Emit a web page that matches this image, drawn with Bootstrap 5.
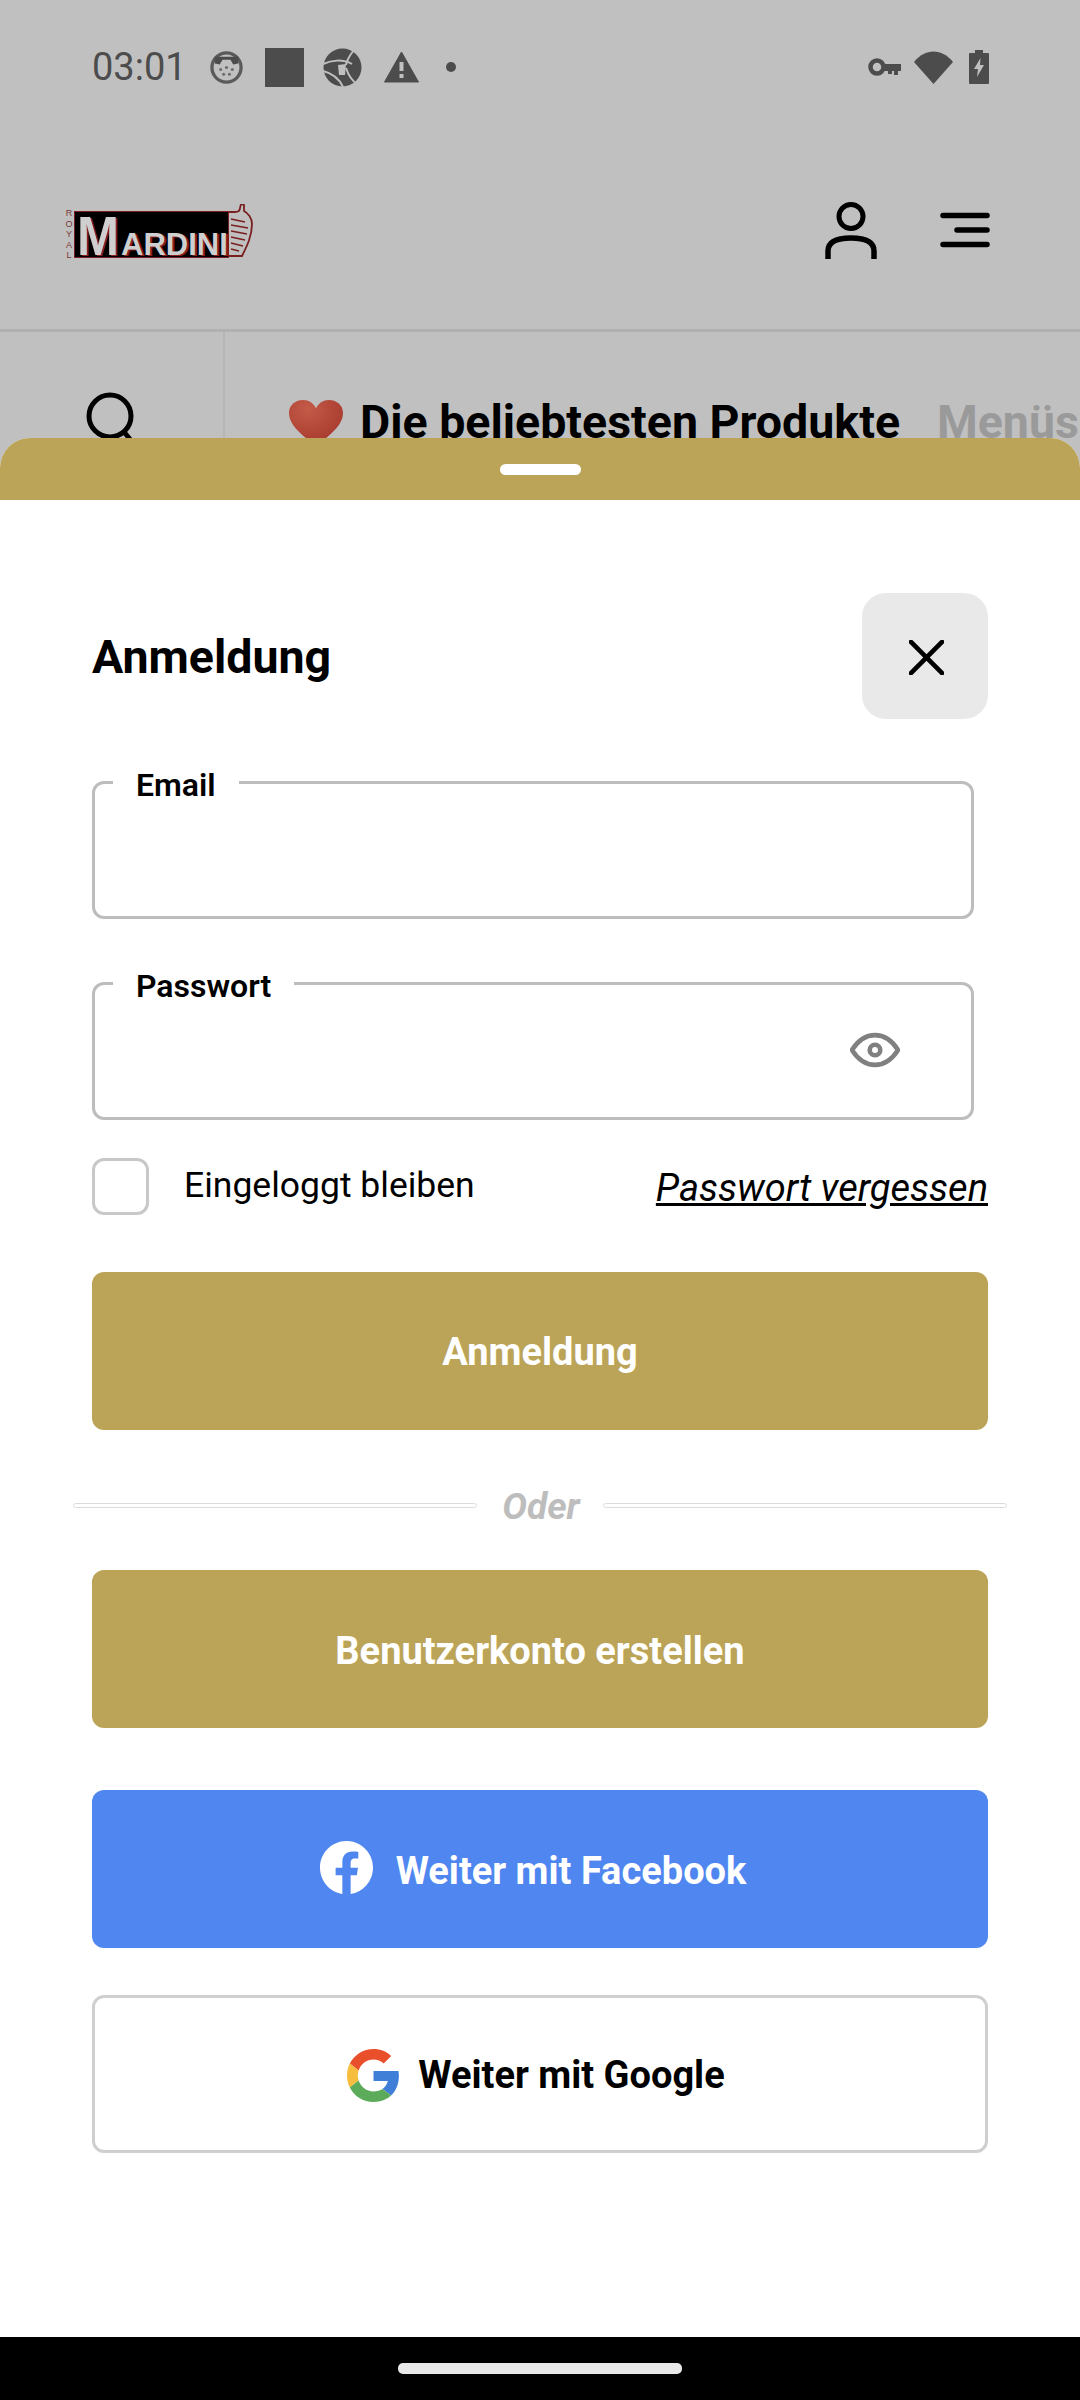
<!DOCTYPE html>
<html lang="de">
<head>
<meta charset="utf-8">
<title>Anmeldung</title>
<link rel="stylesheet" href="https://cdn.jsdelivr.net/npm/bootstrap@5.3.0/dist/css/bootstrap.min.css">
<style>
html,body{margin:0;width:1080px;height:2400px;overflow:hidden;}
body{background:#c0c0c0;font-family:Roboto,"Liberation Sans",sans-serif;position:relative;color:#000;}
.statusrow{height:134px;padding:0 91px 0 92px;color:#4c4c4c;}
.clock{font-size:38px;line-height:134px;width:118px;}
.st-ico{display:block;}
.apphead{height:198px;padding:0 90px 0 64px;border-bottom:3px solid #b0b0b0;}
.logo-royal{writing-mode:vertical-rl;text-orientation:upright;font-size:9px;line-height:9px;letter-spacing:.6px;color:#7a3a3a;margin-right:1px;font-family:"Liberation Sans",sans-serif;}
.logo-box{background:#000;border:1px solid #7a1f1f;width:155px;height:47px;font-family:"Liberation Sans",sans-serif;font-weight:700;color:#cfcfcf;text-shadow:2px 1px 0 #8a1f1f;line-height:47px;white-space:nowrap;overflow:hidden;padding:0 0 0 2px;}
.logo-m{font-size:56px;display:inline-block;width:44px;transform:scaleX(.9);transform-origin:left;}
.logo-rest{font-size:31px;display:inline-block;}
.logo-wrap{margin-top:6px;}
.user-gap{margin:0 63px 4px 0;}
.menu-ico{margin-bottom:4px;}
.tabrow{height:106px;}
.searchcell{width:225px;border-right:2px solid #b5b5b5;padding:60px 0 0 84px;height:106px;}
.tabs{padding-left:64px;font-size:46.5px;font-weight:700;line-height:50px;white-space:nowrap;overflow:hidden;padding-top:65px;}
.tab-off{color:#9a9a9a;margin-left:37px;}
.heart{margin-right:17px;vertical-align:-8px;}
.sheet{position:absolute;left:0;right:0;top:438px;bottom:63px;background:#fff;border-radius:30px 30px 0 0;overflow:hidden;}
.grip-bar{height:62px;background:#bba457;}
.grip{width:81px;height:11px;border-radius:6px;background:#fff;margin-top:26px;}
.sheet-body{padding:93px 92px 0;}
.sheet-title{font-size:46.5px;font-weight:700;margin:0;line-height:1;padding-top:2px;}
.closer{width:126px;height:126px;background:#e9e9e9;border:0;border-radius:24px;padding:3px 0 0 3px;}
.fieldbox{margin:42px 14px 0 0;height:158px;border:3px solid #bdbdbd;border-radius:12px;padding:0 0 0 18px;min-width:0;position:relative;}
.fieldbox + .fieldbox{margin-top:43px;}
.fieldbox legend{float:none;width:auto;font-size:32px;font-weight:600;line-height:36px;padding:6px 23px 0;margin:0;}
.eye{position:absolute;right:71px;top:28px;}
.keep-row{margin-top:38px;height:57px;}
.form-check-input.keep-box{width:57px;height:57px;margin:0 35px 0 0;border:3px solid #c8c8c8;border-radius:12px;background-color:#fff;float:none;}
.keep-label{font-size:35.5px;line-height:52px;margin-bottom:3px;}
.forgot{font-size:38px;font-style:italic;color:#000;text-decoration:underline;line-height:62px;padding-top:2px;}
.bigbtn{display:block;width:100%;height:158px;border-radius:12px;font-size:38px;font-weight:700;border:0;padding:2px 0 0;}
.gold{background:#bba457;color:#fff;}
.gold:hover,.fb:hover{color:#fff;}
.fb{background:#4f86f0;color:#fff;margin-top:62px;padding:4px 14px 0 0;}
.goog{background:#fff;color:#000;border:3px solid #cfcfcf;margin-top:47px;padding:2px 8px 0 0;}
.fb-glyph{margin:0 23px 8px 0;}
.m-top1{margin-top:57px;}
.m-top2{margin-top:46px;padding-top:5px;}
.ordiv{margin:54px -19px 0;height:40px;color:#bdbdbd;font-size:37px;font-style:italic;font-weight:700;line-height:40px;}
.ordiv i{flex:1;height:5px;border:1.500px solid #dcdcdc;border-radius:3px;background:#fff;margin-top:2px;}
.ordiv span{padding:5px 23px 0 25px;}
.navbarbottom{position:absolute;left:0;right:0;bottom:0;height:63px;background:#000;}
.navpill{width:284px;height:11px;border-radius:5px;background:#e8e8e8;}
</style>
</head>
<body>
<div class="statusrow d-flex align-items-center">
  <span class="clock">03:01</span>
  <svg class="st-ico" width="33" height="33" viewBox="0 0 34 34" style="margin-right:22px"><circle cx="17" cy="17" r="15" fill="#c0c0c0" stroke="#5a5a5a" stroke-width="3.400"/><path d="M5 13V6h24v7l-5 1-3-5h-8l-3 5z" fill="#4c4c4c"/><g fill="#6d6d6d"><circle cx="11" cy="19" r="1.600"/><circle cx="17" cy="17" r="1.600"/><circle cx="23" cy="19" r="1.600"/><circle cx="14" cy="24" r="1.600"/><circle cx="20" cy="24" r="1.600"/></g></svg>
  <svg class="st-ico" width="39" height="39" viewBox="0 0 39 39" style="margin-right:19px"><rect width="39" height="39" fill="#4c4c4c"/></svg>
  <svg class="st-ico" width="39" height="39" viewBox="0 0 39 39" style="margin-right:22px"><circle cx="19.500" cy="19.500" r="19" fill="#4c4c4c"/><path d="M0 16C8 12 20 11 29 16M31 2C27 7 24 11 23 17M0 23C8 25 16 30 20 39M23 20C25 26 28 32 34 36" fill="none" stroke="#c0c0c0" stroke-width="2"/><path d="M15 17l8-1-1 11-6 0z" fill="#c0c0c0"/></svg>
  <svg class="st-ico" width="35" height="32" viewBox="0 0 35 32" style="margin-right:27px"><path d="M17.500 1L34.500 31H.5z" fill="#4c4c4c" stroke="#4c4c4c" stroke-linejoin="round"/><rect x="15.500" y="11" width="4" height="9" fill="#c0c0c0"/><rect x="15.500" y="23" width="4" height="4" fill="#c0c0c0"/></svg>
  <svg class="st-ico" width="10" height="10" viewBox="0 0 10 10"><circle cx="5" cy="5" r="5" fill="#4c4c4c"/></svg>
  <div class="ms-auto d-flex align-items-center">
    <svg class="st-ico" width="33" height="22" viewBox="0 0 33 22" style="margin-right:13px"><circle cx="9" cy="11" r="6.500" fill="none" stroke="#4c4c4c" stroke-width="4.500"/><path d="M16 8h17v7h-3v4h-4v-4h-2v3h-4v-3h-4z" fill="#4c4c4c"/></svg>
    <svg class="st-ico" width="39" height="33" viewBox="0 0 39 33" style="margin-right:16px"><path d="M0 11C11 -3 28 -3 39 11L19.500 33z" fill="#4c4c4c"/></svg>
    <svg class="st-ico" width="20" height="34" viewBox="0 0 20 34"><path d="M6 0h8v3h5a1 1 0 0 1 1 1v29a1 1 0 0 1-1 1H1a1 1 0 0 1-1-1V4a1 1 0 0 1 1-1h5z" fill="#4c4c4c"/><path d="M11.500 8L5 19h4l-1 8 7-12h-4z" fill="#c0c0c0"/></svg>
  </div>
</div>
<header class="apphead d-flex align-items-center">
  <div class="logo-wrap d-flex align-items-center flex-grow-1">
    <span class="logo-royal">ROYAL</span>
    <div class="logo-box"><span class="logo-m">M</span><span class="logo-rest">ARDINI</span></div>
    <svg width="24" height="54" viewBox="0 0 24 54" class="st-ico" style="margin-top:-8px"><path d="M0 8h6c3 0 5-1 5-4l1-4 3 1v6c4 2 8 7 8 13 0 12-5 22-10 32H0" fill="none" stroke="#7a1f1f" stroke-width="1.800"/><path d="M2 15l14 3M2 21l17 3M2 27l16 3M2 33l14 3M2 39l12 3M2 45l8 2" stroke="#7a1f1f" stroke-width="1.500" fill="none"/></svg>
  </div>
  <svg class="st-ico user-gap" width="52" height="58" viewBox="0 0 52 58"><circle cx="26" cy="15.500" r="12" fill="none" stroke="#000" stroke-width="5"/><path d="M3 58V50C3 41 12 37 26 37S49 41 49 50V58" fill="none" stroke="#000" stroke-width="5.500"/></svg>
  <svg class="st-ico menu-ico" width="50" height="36" viewBox="0 0 50 36"><path d="M3 3.500H47M17 18H47M3 32.500H47" stroke="#000" stroke-width="5.500" stroke-linecap="round"/></svg>
</header>
<div class="tabrow d-flex">
  <div class="searchcell"><svg class="st-ico" width="54" height="60" viewBox="0 0 54 60"><circle cx="26" cy="24" r="21" fill="none" stroke="#000" stroke-width="5"/><path d="M40 40l10 12" stroke="#000" stroke-width="5"/></svg></div>
  <div class="tabs flex-grow-1"><svg class="heart" width="54" height="46" viewBox="0 0 54 50" preserveAspectRatio="none"><defs><radialGradient id="hg" cx=".35" cy=".2" r=".9"><stop offset="0" stop-color="#c45a48"/><stop offset="1" stop-color="#a2362a"/></radialGradient></defs><path d="M27 50C10 36 0 26 0 14 0 5 7 0 14 0c6 0 10 3 13 9 3-6 7-9 13-9 7 0 14 5 14 14 0 12-10 22-27 36z" fill="url(#hg)"/></svg>Die beliebtesten Produkte<span class="tab-off">Menüs</span></div>
</div>
<section class="sheet">
  <div class="grip-bar d-flex justify-content-center"><div class="grip"></div></div>
  <div class="sheet-body">
    <div class="d-flex align-items-center justify-content-between">
      <h1 class="sheet-title">Anmeldung</h1>
      <button class="closer d-flex align-items-center justify-content-center" type="button" aria-label="Schließen"><svg width="35" height="35" viewBox="0 0 36 36"><path d="M2 2L34 34M34 2L2 34" stroke="#000" stroke-width="4.800" stroke-linecap="round"/></svg></button>
    </div>
    <fieldset class="fieldbox"><legend>Email</legend></fieldset>
    <fieldset class="fieldbox"><legend>Passwort</legend>
      <svg class="eye" width="50" height="36" viewBox="0 0 52 36"><path d="M2 18C9 7 17 2.500 26 2.500S43 7 50 18C43 29 35 33.500 26 33.500S9 29 2 18z" fill="none" stroke="#808080" stroke-width="4.800"/><circle cx="26" cy="18" r="5.500" fill="none" stroke="#808080" stroke-width="4.800"/></svg>
    </fieldset>
    <div class="keep-row d-flex align-items-center justify-content-between">
      <div class="d-flex align-items-center"><input class="form-check-input keep-box" type="checkbox" id="keep"><label class="keep-label" for="keep">Eingeloggt bleiben</label></div>
      <a class="forgot" href="#">Passwort vergessen</a>
    </div>
    <button class="btn bigbtn gold m-top1" type="button">Anmeldung</button>
    <div class="ordiv d-flex align-items-center"><i></i><span>Oder</span><i></i></div>
    <button class="btn bigbtn gold m-top2" type="button">Benutzerkonto erstellen</button>
    <button class="btn bigbtn fb d-flex align-items-center justify-content-center" type="button"><svg class="fb-glyph" width="53" height="53" viewBox="0 0 16 16"><path fill="#fff" d="M16 8.049c0-4.446-3.582-8.050-8-8.050C3.580 0-.002 3.603-.002 8.050c0 4.017 2.926 7.347 6.750 7.951v-5.625h-2.030V8.050H6.750V6.275c0-2.017 1.195-3.131 3.022-3.131.876 0 1.791.157 1.791.157v1.980h-1.009c-.993 0-1.303.621-1.303 1.258v1.510h2.218l-.354 2.326H9.250V16c3.824-.604 6.750-3.934 6.750-7.951z"/></svg><span>Weiter mit Facebook</span></button>
    <button class="btn bigbtn goog d-flex align-items-center justify-content-center" type="button"><svg width="53" height="53" viewBox="0 0 48 48" style="margin-right:18px"><path fill="#EA4F2B" d="M24 9.500c3.540 0 6.710 1.220 9.210 3.600l6.850-6.850C35.900 2.380 30.470 0 24 0 14.620 0 6.510 5.380 2.560 13.220l7.980 6.190C12.430 13.720 17.740 9.500 24 9.500z"/><path fill="#3F7FD8" d="M46.980 24.550c0-1.570-.15-3.090-.38-4.550H24v9.020h12.940c-.58 2.960-2.260 5.480-4.780 7.180l7.730 6c4.510-4.180 7.090-10.360 7.090-17.650z"/><path fill="#F6BD3E" d="M10.530 28.590c-.48-1.450-.76-2.990-.76-4.590s.27-3.140.76-4.590l-7.980-6.190C.92 16.460 0 20.120 0 24c0 3.880.92 7.540 2.560 10.780l7.970-6.190z"/><path fill="#5CAB5A" d="M24 48c6.480 0 11.930-2.130 15.890-5.810l-7.730-6c-2.150 1.450-4.920 2.300-8.160 2.300-6.260 0-11.570-4.220-13.470-9.910l-7.980 6.190C6.510 42.620 14.620 48 24 48z"/></svg>Weiter mit Google</button>
  </div>
</section>
<footer class="navbarbottom d-flex justify-content-center align-items-center"><div class="navpill"></div></footer>
<script src="https://cdn.jsdelivr.net/npm/bootstrap@5.3.0/dist/js/bootstrap.bundle.min.js"></script>
</body>
</html>
